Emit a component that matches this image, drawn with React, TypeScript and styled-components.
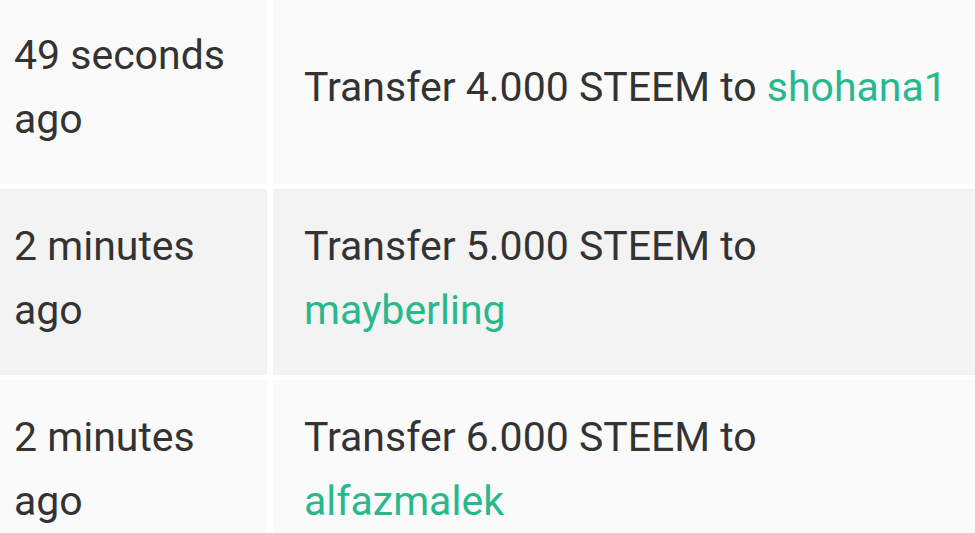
import { Fragment } from 'react';
import styled, { createGlobalStyle } from 'styled-components';

const GlobalStyle = createGlobalStyle`
  html, body {
    margin: 0;
    padding: 0;
    background: #ffffff;
  }
  body {
    font-family: Roboto, "Liberation Sans", sans-serif;
    color: #333333;
    overflow: hidden;
  }
`;

const Table = styled.div`
  display: grid;
  grid-template-columns: 267px 1fr;
  column-gap: 6px;
  row-gap: 5px;
  margin-top: -2px;
  width: 975px;
  background: #ffffff;
`;

const Cell = styled.div<{ $even: boolean; $wide?: boolean }>`
  display: flex;
  align-items: center;
  min-height: 186px;
  box-sizing: border-box;
  padding: 25px 20px 33px ${(p) => (p.$wide ? '31px' : '14px')};
  background: ${(p) => (p.$even ? '#f3f3f3' : '#fafafa')};
  font-size: 41px;
  line-height: 64px;
  color: #333333;
`;

const Account = styled.a`
  color: #27b98d;
  text-decoration: none;
`;

type Transfer = {
  when: string;
  amount: string;
  to: string;
};

const transfers: Transfer[] = [
  { when: '49 seconds ago', amount: '4.000', to: 'shohana1' },
  { when: '2 minutes ago', amount: '5.000', to: 'mayberling' },
  { when: '2 minutes ago', amount: '6.000', to: 'alfazmalek' },
];

const App = () => {
  return (
    <>
      <GlobalStyle />
      <Table>
        {transfers.map((t, i) => (
          <Fragment key={i}>
            <Cell $even={i % 2 === 1}>
              <span>{t.when}</span>
            </Cell>
            <Cell $even={i % 2 === 1} $wide>
              <span>
                {`Transfer ${t.amount} STEEM to `}
                <Account href="#">{t.to}</Account>
              </span>
            </Cell>
          </Fragment>
        ))}
      </Table>
    </>
  );
};

export default App;
